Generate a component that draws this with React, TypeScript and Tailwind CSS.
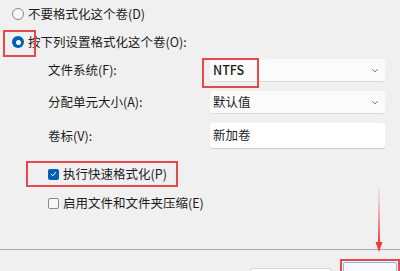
import React from "react";

const Chevron = () => (
  <svg width="8" height="5" viewBox="0 0 8 5" className="mr-[6px]">
    <polyline points="1,1 4,4 7,1" fill="none" stroke="#8a8a8a" strokeWidth="1" />
  </svg>
);

const Radio = ({ checked }: { checked?: boolean }) =>
  checked ? (
    <span className="w-[12px] h-[12px] rounded-full bg-[#005fb8] flex items-center justify-center shrink-0">
      <span className="w-[5px] h-[5px] rounded-full bg-white" />
    </span>
  ) : (
    <span className="w-[12px] h-[12px] rounded-full border border-[#8a8a8a] bg-[#f7f7f7] shrink-0" />
  );

const Check = ({ checked }: { checked?: boolean }) =>
  checked ? (
    <span className="w-[11px] h-[11px] rounded-[2px] bg-[#005fb8] flex items-center justify-center shrink-0">
      <svg width="7" height="6" viewBox="0 0 7 6">
        <polyline points="1,3 2.8,4.8 6,1" fill="none" stroke="white" strokeWidth="1" />
      </svg>
    </span>
  ) : (
    <span className="w-[11px] h-[11px] rounded-[2px] border border-[#8a8a8a] bg-[#f7f7f7] shrink-0" />
  );

const Select = ({ value, bold }: { value: string; bold?: boolean }) => (
  <div className="h-[23px] flex items-center justify-between bg-[#fbfbfb] border-b border-[#dcdcdc] rounded-[3px] pl-[3px]">
    <span className={bold ? "font-medium" : ""}>{value}</span>
    <Chevron />
  </div>
);

export default function App() {
  return (
    <div
      className="relative w-[400px] h-[271px] overflow-hidden bg-[#f0f0f0] text-[12.5px] text-[#1b1b1b]"
      style={{ fontFamily: '"Noto Sans CJK SC", "Noto Sans", sans-serif' }}
    >
      <div className="pl-3 pt-[4px]">
        <div className="h-[20px] flex items-center gap-[4px]">
          <Radio />
          <span>不要格式化这个卷(D)</span>
        </div>
        <div className="mt-[8px] h-[20px] flex items-center gap-[4px]">
          <Radio checked />
          <span>按下列设置格式化这个卷(O):</span>
        </div>

        <div className="ml-9 mt-[7px] grid grid-cols-[162px_175px] gap-y-[9px] items-center">
          <span>文件系统(F):</span>
          <Select value="NTFS" bold />
          <span>分配单元大小(A):</span>
          <Select value="默认值" />
          <span>卷标(V):</span>
          <div className="h-[26px] flex items-center bg-white border-b border-[#c8c8c8] rounded-[3px] pl-[3px]">
            新加卷
          </div>
        </div>

        <div className="ml-9 mt-[15px] h-[20px] flex items-center gap-[4px]">
          <Check checked />
          <span>执行快速格式化(P)</span>
        </div>
        <div className="ml-9 mt-[9px] h-[20px] flex items-center gap-[4px]">
          <Check />
          <span>启用文件和文件夹压缩(E)</span>
        </div>
      </div>

      <div className="mt-[36px] border-t border-[#a8a8a8] flex justify-end items-start">
        <div className="mt-[18px] w-[82px] h-[10px] bg-white border border-[#d4d4d4] rounded-[3px]" />
        <div className="ml-[8px] mt-[9px] w-[60px] h-[20px] border-2 border-[#e5484d] p-[1px]">
          <div className="h-full bg-[#f7f9fc] border border-[#8cbbe8] rounded-[2px]" />
        </div>
      </div>

      {/* annotations */}
      <div className="absolute left-[3px] top-[30px] w-[33px] h-[27px] border-2 border-[#e5484d]" />
      <div className="absolute left-[202px] top-[58px] w-[57px] h-[30px] border-2 border-[#e5484d]" />
      <div className="absolute left-[26px] top-[161px] w-[152px] h-[26px] border-2 border-[#e5484d]" />
      <svg className="absolute left-[372px] top-[185px]" width="14" height="70" viewBox="0 0 14 70">
        <defs>
          <linearGradient id="arr" x1="0" y1="0" x2="0" y2="1">
            <stop offset="0" stopColor="#f03a3a" stopOpacity="0.1" />
            <stop offset="1" stopColor="#f03a3a" stopOpacity="1" />
          </linearGradient>
        </defs>
        <polygon points="6.5,2 7.5,2 8,58 6,58" fill="url(#arr)" />
        <polygon points="3.5,57 10.5,57 7,67" fill="#f03a3a" />
      </svg>
    </div>
  );
}
